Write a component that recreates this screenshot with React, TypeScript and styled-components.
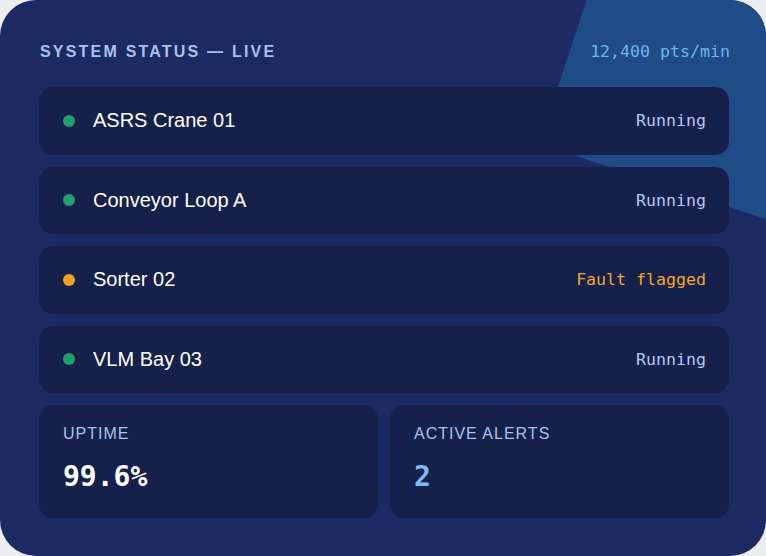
import React from 'react';
import styled, { createGlobalStyle } from 'styled-components';

type Tone = 'ok' | 'warn';

const GlobalStyle = createGlobalStyle`
  html, body {
    margin: 0;
    padding: 0;
    background: #eceef2;
  }
  * {
    box-sizing: border-box;
  }
`;

const Card = styled.section`
  position: relative;
  overflow: hidden;
  width: 766px;
  height: 556px;
  padding: 42px 37px 38px 39px;
  border-radius: 36px;
  background: #1c2a64;
  font-family: 'Liberation Sans', Arial, sans-serif;
`;

// tilted rounded square peeking in from the top-right corner
const Glow = styled.div`
  position: absolute;
  top: -85px;
  right: -90px;
  width: 280px;
  height: 280px;
  border-radius: 40px;
  background: #1f4b87;
  transform: rotate(18.4deg);
`;

const Content = styled.div`
  position: relative;
  display: flex;
  flex-direction: column;
`;

const Header = styled.header`
  display: flex;
  align-items: center;
  justify-content: space-between;
  margin: 0 -1px 26px 0;
  padding-left: 1px;
`;

const Title = styled.h1`
  margin: 0;
  font-size: 16px;
  font-weight: 700;
  letter-spacing: 2.2px;
  color: #a9c1ee;
`;

const Rate = styled.span`
  font-family: 'DejaVu Sans Mono', monospace;
  font-size: 16.6px;
  color: #6fb3ec;
`;

const RowList = styled.div`
  display: flex;
  flex-direction: column;
  gap: 12px;
  margin-bottom: 12px;
`;

const Row = styled.div`
  display: flex;
  align-items: center;
  min-height: 67.5px;
  padding: 0 23px 0 24px;
  border-radius: 14px;
  background: #16214b;
`;

const Dot = styled.span<{ $tone: Tone }>`
  flex-shrink: 0;
  width: 12px;
  height: 12px;
  margin-right: 18px;
  border-radius: 50%;
  background: ${(p) => (p.$tone === 'warn' ? '#eea226' : '#21a06a')};
`;

const Name = styled.span`
  flex: 1;
  font-size: 20px;
  color: #ffffff;
`;

const Status = styled.span<{ $tone: Tone }>`
  font-family: 'DejaVu Sans Mono', monospace;
  font-size: 16.6px;
  color: ${(p) => (p.$tone === 'warn' ? '#f0a52c' : '#b4c8f0')};
`;

const StatsGrid = styled.div`
  display: grid;
  grid-template-columns: 1fr 1fr;
  gap: 12px;
`;

const StatBox = styled.div`
  display: flex;
  flex-direction: column;
  padding: 20px 24px 25px;
  border-radius: 14px;
  background: #16214b;
`;

const StatLabel = styled.span`
  margin-bottom: 17px;
  font-size: 16px;
  letter-spacing: 1px;
  color: #a9c1ee;
`;

const StatValue = styled.span<{ $accent?: boolean }>`
  font-family: 'DejaVu Sans Mono', monospace;
  font-size: 28px;
  font-weight: 700;
  color: ${(p) => (p.$accent ? '#7dbcf0' : '#ffffff')};
`;

const units: { name: string; status: string; tone: Tone }[] = [
  { name: 'ASRS Crane 01', status: 'Running', tone: 'ok' },
  { name: 'Conveyor Loop A', status: 'Running', tone: 'ok' },
  { name: 'Sorter 02', status: 'Fault flagged', tone: 'warn' },
  { name: 'VLM Bay 03', status: 'Running', tone: 'ok' },
];

export default function App() {
  return (
    <>
      <GlobalStyle />
      <Card>
        <Glow />
        <Content>
          <Header>
            <Title>SYSTEM STATUS — LIVE</Title>
            <Rate>12,400 pts/min</Rate>
          </Header>
          <RowList>
            {units.map((u) => (
              <Row key={u.name}>
                <Dot $tone={u.tone} />
                <Name>{u.name}</Name>
                <Status $tone={u.tone}>{u.status}</Status>
              </Row>
            ))}
          </RowList>
          <StatsGrid>
            <StatBox>
              <StatLabel>UPTIME</StatLabel>
              <StatValue>99.6%</StatValue>
            </StatBox>
            <StatBox>
              <StatLabel>ACTIVE ALERTS</StatLabel>
              <StatValue $accent>2</StatValue>
            </StatBox>
          </StatsGrid>
        </Content>
      </Card>
    </>
  );
}
